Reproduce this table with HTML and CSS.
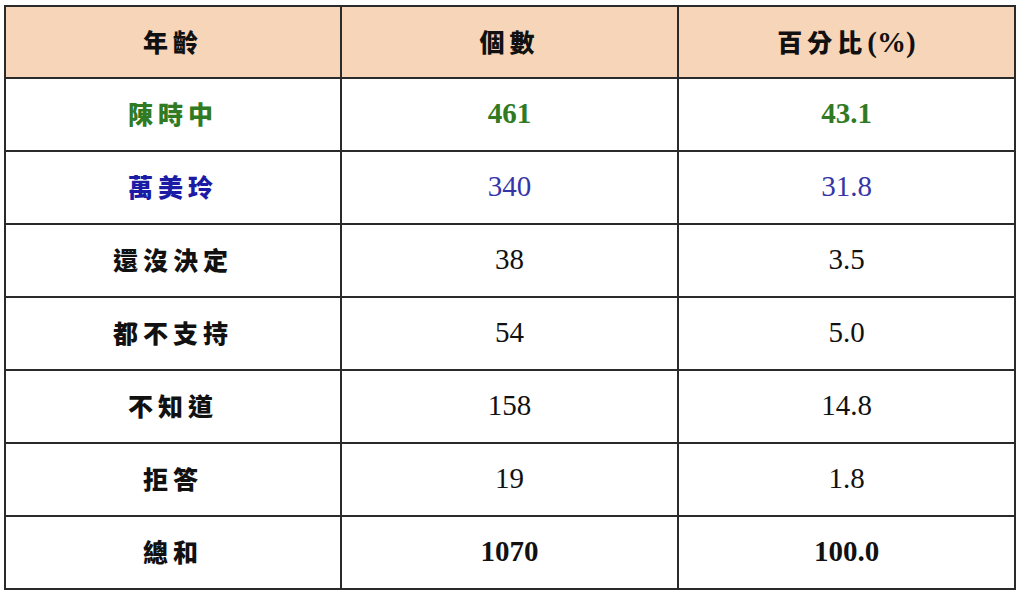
FILE: index.html
```html
<!DOCTYPE html>
<html lang="zh-Hant">
<head>
<meta charset="utf-8">
<title>民調表</title>
<link rel="stylesheet" href="styles.css">
</head>
<body>
<div class="wrap">
<table class="poll">
  <colgroup><col class="c1"><col class="c2"><col class="c3"></colgroup>
  <thead>
    <tr class="head"><th class="cjk">年齡</th><th class="cjk">個數</th><th class="cjk">百分比<span class="num b">(%)</span></th></tr>
  </thead>
  <tbody>
    <tr class="green"><td class="cjk">陳時中</td><td class="num b">461</td><td class="num b">43.1</td></tr>
    <tr class="blue"><td class="cjk">萬美玲</td><td class="num">340</td><td class="num">31.8</td></tr>
    <tr><td class="cjk">還沒決定</td><td class="num">38</td><td class="num">3.5</td></tr>
    <tr><td class="cjk">都不支持</td><td class="num">54</td><td class="num">5.0</td></tr>
    <tr><td class="cjk">不知道</td><td class="num">158</td><td class="num">14.8</td></tr>
    <tr><td class="cjk">拒答</td><td class="num">19</td><td class="num">1.8</td></tr>
    <tr><td class="cjk">總和</td><td class="num b">1070</td><td class="num b">100.0</td></tr>
  </tbody>
</table>
</div>
</body>
</html>
```

FILE: styles.css
```css
html, body {
  margin: 0;
  padding: 0;
  background: #ffffff;
}
.wrap {
  padding: 5px 0 0 4px;
}
.poll {
  border-collapse: collapse;
  width: 1009px;
  table-layout: fixed;
  color: #111;
}
.poll th, .poll td {
  border: 2px solid #2a2a2a;
  text-align: center;
  vertical-align: middle;
  padding: 0 0 3px 0;
}
.c1 { width: 336px; }
.c2, .c3 { width: 337px; }
.head { height: 72px; background: #f6d5b9; }
.head th { background: #f6d5b9; }
tbody tr { height: 73px; }
.cjk {
  font-family: "Noto Sans CJK TC", "Noto Sans CJK SC", sans-serif;
  font-weight: 900;
  font-size: 25px;
  letter-spacing: 5px;
}
.num {
  font-family: "Liberation Serif", serif;
  font-size: 29px;
  font-weight: 400;
  letter-spacing: 0;
}
.num.b { font-weight: 700; }
.head .num { font-size: 29px; }
.green td { color: #2f7a22; }
.blue td { color: #1b1ba6; }
.blue td.num { color: #3535a8; }
```
